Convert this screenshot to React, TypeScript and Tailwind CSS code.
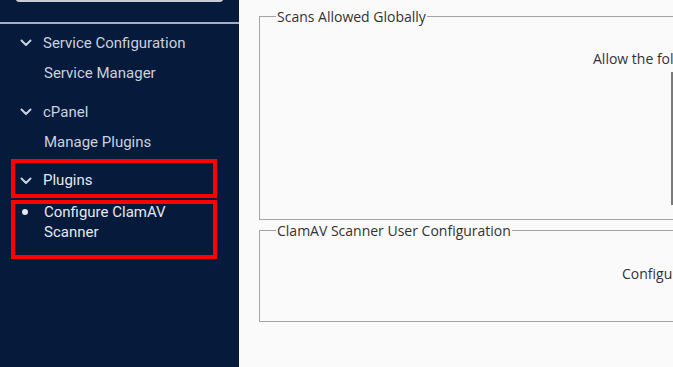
import React from "react";

function Chevron() {
  return (
    <svg width="12" height="8" viewBox="0 0 12 8" className="shrink-0">
      <path d="M1.5 1.5 L6 6 L10.5 1.5" fill="none" stroke="#c9d1de" strokeWidth="2" strokeLinecap="round" strokeLinejoin="round" />
    </svg>
  );
}

export default function App() {
  return (
    <div className="flex h-[367px] w-[673px] overflow-hidden" style={{ fontFamily: "Roboto, sans-serif" }}>
      <aside className="w-[239px] shrink-0 bg-[#061a3c] text-[15px] text-[#c9d1de]">
        <div className="mx-4 -mt-[30px] h-[32px] rounded-[3px] border-b-2 border-[#c7ccd6] bg-white" />
        <div className="mt-[20px] h-[2px] bg-[#a7afbe]" />
        <nav className="pt-[8px]">
          <div className="flex h-[22px] items-center gap-[11px] pl-[20px]">
            <Chevron />
            <span>Service Configuration</span>
          </div>
          <div className="mt-[8px] flex h-[22px] items-center pl-[44px]">Service Manager</div>
          <div className="mt-[17px] flex h-[22px] items-center gap-[11px] pl-[20px]">
            <Chevron />
            <span>cPanel</span>
          </div>
          <div className="mt-[8px] flex h-[22px] items-center pl-[44px]">Manage Plugins</div>
          <div className="ml-[11px] mt-[6px] w-[206px] border-4 border-[#ff0000]">
            <div className="flex h-[31px] items-center gap-[11px] pl-[5px] pt-[4px] text-[#e4e8ef]">
              <Chevron />
              <span>Plugins</span>
            </div>
          </div>
          <div className="ml-[11px] mt-[2px] h-[59px] w-[206px] border-4 border-[#ff0000]">
            <div className="-mt-[2px] flex text-[#e4e8ef]">
              <span className="ml-[7px] mt-[7px] h-[6px] w-[6px] shrink-0 rounded-full bg-[#e4e8ef]" />
              <span className="ml-[16px] leading-[20px]">Configure ClamAV<br />Scanner</span>
            </div>
          </div>
        </nav>
      </aside>
      <main className="flex-1 overflow-hidden bg-[#fafafa] text-[14px] text-[#333333]" style={{ fontFamily: "'Open Sans', sans-serif" }}>
        <div className="w-[700px] pl-[20px] pt-[7px]">
          <fieldset className="h-[213px] border border-[#a3a3a3] pl-[16px]">
            <legend className="px-[1px] leading-[19px]">Scans Allowed Globally</legend>
            <div className="pl-[317px] pt-[23px] leading-[19px]">Allow the following</div>
            <div className="ml-[395px] mt-[4px] h-[133px] border-l-2 border-[#7a7a7a]" />
          </fieldset>
          <fieldset className="mt-[1px] h-[101px] border border-[#a3a3a3] pl-[16px]">
            <legend className="px-[1px] leading-[19px]">ClamAV Scanner User Configuration</legend>
            <div className="pl-[346px] pt-[24px] leading-[19px]">Configure</div>
          </fieldset>
        </div>
      </main>
    </div>
  );
}
